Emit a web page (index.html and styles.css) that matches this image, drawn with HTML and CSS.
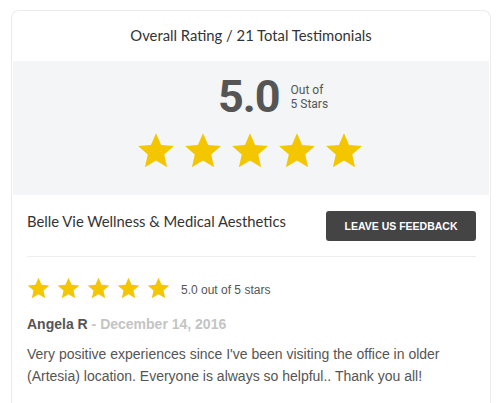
FILE: index.html
```html
<!DOCTYPE html>
<html>
<head>
<meta charset="utf-8">
<link rel="stylesheet" href="styles.css">
</head>
<body>
<svg width="0" height="0" class="defs">
  <symbol id="star" viewBox="0 0 24 24">
    <polygon points="12,0.8 15.2,8.2 23.3,8.9 17.2,14.2 19,22.2 12,18 5,22.2 6.8,14.2 0.7,8.9 8.8,8.2"/>
  </symbol>
</svg>
<div class="card">
  <div class="card-head">Overall Rating / 21 Total Testimonials</div>
  <div class="summary">
    <div class="score">
      <span class="score-num">5.0</span>
      <span class="score-label">Out of<br>5 Stars</span>
    </div>
    <div class="stars big">
      <svg><use href="#star"/></svg>
      <svg><use href="#star"/></svg>
      <svg><use href="#star"/></svg>
      <svg><use href="#star"/></svg>
      <svg><use href="#star"/></svg>
    </div>
  </div>
  <div class="body">
    <div class="biz-row">
      <div class="biz-name">Belle Vie Wellness &amp; Medical Aesthetics</div>
      <button class="feedback-btn">LEAVE US FEEDBACK</button>
    </div>
    <div class="review">
      <div class="review-rating">
        <div class="stars small">
          <svg><use href="#star"/></svg>
          <svg><use href="#star"/></svg>
          <svg><use href="#star"/></svg>
          <svg><use href="#star"/></svg>
          <svg><use href="#star"/></svg>
        </div>
        <span class="rating-text">5.0 out of 5 stars</span>
      </div>
      <div class="review-meta"><span class="author">Angela R</span> - December 14, 2016</div>
      <p class="review-text">Very positive experiences since I've been visiting the office in older (Artesia) location. Everyone is always so helpful.. Thank you all!</p>
    </div>
  </div>
</div>
</body>
</html>
```
FILE: styles.css
```css
* { box-sizing: border-box; }
html, body { margin: 0; padding: 0; background: #fff; }
body { font-family: "Liberation Sans", Arial, sans-serif; color: #555; }
.defs { position: absolute; }

.card {
  margin: 10px 0 0 11px;
  width: 480px;
  height: 393px;
  border: 1px solid #ececec;
  border-bottom: 0;
  border-radius: 8px 8px 0 0;
  background: #fff;
}
.card-head {
  height: 50px;
  display: flex;
  align-items: center;
  justify-content: center;
  font-family: Lato, "Open Sans", sans-serif;
  font-size: 14.8px;
  color: #333;
  padding-bottom: 2px;
}
.summary {
  background: #f3f5f6;
  height: 134px;
  display: flex;
  flex-direction: column;
  align-items: center;
  padding-top: 12px;
  margin: 0 1px;
}
.score {
  display: flex;
  align-items: center;
  margin-left: 44px;
  height: 46px;
}
.score-num {
  font-family: Roboto, "Liberation Sans", sans-serif;
  font-weight: 700;
  font-size: 45px;
  letter-spacing: -1px;
  color: #555;
  line-height: 1;
}
.score-label {
  font-family: Roboto, "Liberation Sans", sans-serif;
  font-size: 12px;
  line-height: 14px;
  color: #555;
  margin-left: 11px;
  margin-top: 2px;
}
.stars { display: flex; fill: #f4c600; }
.stars.big { gap: 9px; margin-top: 13px; margin-left: -2px; }
.stars.big svg { width: 38px; height: 38px; }
.stars.small { gap: 7px; }
.stars.small svg { width: 23px; height: 23px; }

.body { padding: 0 14px 0 15px; }
.biz-row {
  display: flex;
  justify-content: space-between;
  align-items: flex-start;
  padding: 16px 0 15px;
  border-bottom: 1px solid #eee;
}
.biz-name {
  font-family: Lato, "Open Sans", sans-serif;
  font-size: 14.8px;
  color: #333;
  margin-top: 1px;
}
.feedback-btn {
  width: 150px;
  height: 30px;
  border: 0;
  border-radius: 3px;
  background: #444;
  color: #fff;
  font-family: "Liberation Sans", Arial, sans-serif;
  font-weight: 700;
  font-size: 10.5px;
  padding: 0;
}
.review { padding-top: 20px; }
.review-rating { display: flex; align-items: center; }
.rating-text { font-size: 12px; margin-left: 11px; margin-top: 3px; color: #555; }
.review-meta {
  margin-top: 16px;
  font-size: 14px;
  font-weight: 700;
  color: #c4c4c4;
}
.author { color: #555; }
.review-text {
  margin: 11px 0 0;
  font-size: 14px;
  line-height: 22px;
  color: #555;
}
```
